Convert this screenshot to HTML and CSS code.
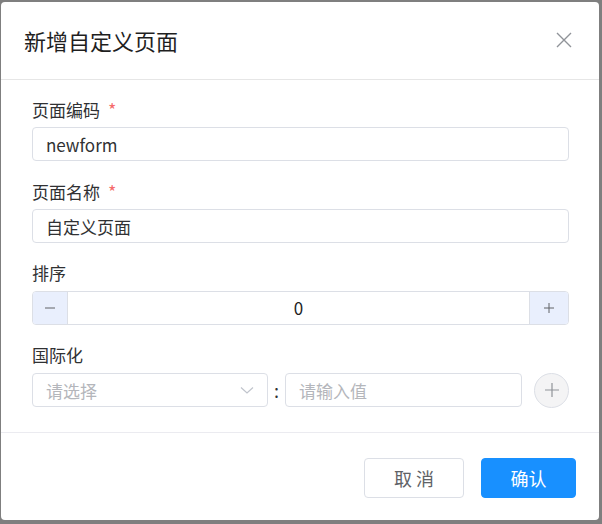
FILE: index.html
```html
<!DOCTYPE html>
<html lang="zh-CN">
<head>
  <meta charset="UTF-8">
  <title>新增自定义页面</title>
  <link rel="stylesheet" href="styles.css">
</head>
<body>

  <div class="dialog">
    <div class="dialog-header">
      <span class="dialog-title">新增自定义页面</span>
      <button class="dialog-close" aria-label="关闭">
        <svg width="16" height="16" viewBox="0 0 16 16">
          <path d="M1 1 L15 15 M15 1 L1 15" stroke="#909399" stroke-width="1.4" fill="none"/>
        </svg>
      </button>
    </div>

    <div class="dialog-body">
      <div class="form-item">
        <label class="form-label required">页面编码</label>
        <input class="text-input" type="text" value="newform">
      </div>

      <div class="form-item">
        <label class="form-label required">页面名称</label>
        <input class="text-input" type="text" value="自定义页面">
      </div>

      <div class="form-item">
        <label class="form-label">排序</label>
        <div class="number-input">
          <span class="num-btn minus">
            <svg width="12" height="12" viewBox="0 0 12 12"><path d="M1 6 H11" stroke="#606266" stroke-width="1"/></svg>
          </span>
          <span class="num-value">0</span>
          <span class="num-btn plus">
            <svg width="12" height="12" viewBox="0 0 12 12"><path d="M1 6 H11 M6 1 V11" stroke="#606266" stroke-width="1"/></svg>
          </span>
        </div>
      </div>

      <div class="form-item">
        <label class="form-label">国际化</label>
        <div class="i18n-row">
          <div class="select">
            <span class="placeholder">请选择</span>
            <svg width="14" height="14" viewBox="0 0 14 14"><path d="M1 4.5 L7 10 L13 4.5" stroke="#c0c4cc" stroke-width="1.2" fill="none"/></svg>
          </div>
          <span class="colon">:</span>
          <div class="value-input"><span class="placeholder">请输入值</span></div>
          <span class="circle-btn">
            <svg width="16" height="16" viewBox="0 0 16 16"><path d="M1 8 H15 M8 1 V15" stroke="#909399" stroke-width="1.2"/></svg>
          </span>
        </div>
      </div>
    </div>

    <div class="dialog-footer">
      <button class="btn btn-default">取 消</button>
      <button class="btn btn-primary">确认</button>
    </div>
  </div>

</body>
</html>
```

FILE: styles.css
```css
body {
  margin: 0;
  background: #7f7f7f;
  font-family: "Noto Sans CJK SC", "Liberation Sans", sans-serif;
  color: #303133;
}

.dialog {
  width: 598px;
  height: 518px;
  margin: 2px 0 0 1px;
  background: #fff;
  border-radius: 4px;
  display: flex;
  flex-direction: column;
}

.dialog-header {
  height: 75px;
  border-bottom: 1px solid #e6e6e6;
  display: flex;
  align-items: center;
  justify-content: space-between;
  padding: 0 27px 2px 23px;
}

.dialog-title {
  font-size: 22px;
  color: #1f1f1f;
}

.dialog-close {
  border: none;
  background: none;
  padding: 0;
  width: 16px;
  height: 16px;
  cursor: pointer;
}

.dialog-body {
  padding: 17px 30px 0 31px;
  flex: 1;
}

.form-item {
  margin-bottom: 18px;
}

.form-label {
  display: block;
  font-size: 17px;
  line-height: 24px;
  height: 24px;
  margin-bottom: 6px;
  color: #303133;
}

.form-label.required::after {
  content: "*";
  color: #f56c6c;
  margin-left: 8px;
  font-size: 18px;
}

.text-input {
  display: block;
  box-sizing: border-box;
  width: 100%;
  height: 34px;
  padding: 0 13px;
  border: 1px solid #dcdfe6;
  border-radius: 4px;
  font-family: inherit;
  font-size: 17px;
  color: #303133;
  outline: none;
}

.number-input {
  display: flex;
  height: 34px;
  box-sizing: border-box;
  border: 1px solid #dcdfe6;
  border-radius: 4px;
  overflow: hidden;
}

.num-btn {
  width: 34px;
  background: #e9effd;
  display: flex;
  align-items: center;
  justify-content: center;
}

.num-btn.minus {
  border-right: 1px solid #dcdfe6;
}

.num-btn.plus {
  width: 38px;
  border-left: 1px solid #dcdfe6;
}

.num-value {
  flex: 1;
  text-align: center;
  line-height: 32px;
  font-size: 17px;
  color: #1f1f1f;
}

.i18n-row {
  display: flex;
  align-items: center;
  height: 34px;
}

.select,
.value-input {
  box-sizing: border-box;
  height: 34px;
  border: 1px solid #dcdfe6;
  border-radius: 4px;
  display: flex;
  align-items: center;
  padding: 0 13px;
}

.select {
  width: 236px;
  justify-content: space-between;
}

.colon {
  width: 17px;
  text-align: center;
  font-size: 18px;
  color: #303133;
}

.value-input {
  width: 237px;
}

.placeholder {
  font-size: 17px;
  color: #b4b6bb;
}

.circle-btn {
  box-sizing: border-box;
  width: 35px;
  height: 35px;
  margin-left: auto;
  border: 1px solid #dcdfe6;
  border-radius: 50%;
  background: #f4f4f5;
  display: flex;
  align-items: center;
  justify-content: center;
}

.dialog-footer {
  border-top: 1px solid #ebebf0;
  padding: 25px 23px 22px 0;
  display: flex;
  justify-content: flex-end;
  gap: 17px;
}

.btn {
  height: 40px;
  border-radius: 4px;
  font-family: inherit;
  font-size: 18px;
  cursor: pointer;
}

.btn-default {
  width: 100px;
  background: #fff;
  border: 1px solid #dcdfe6;
  color: #606266;
}

.btn-primary {
  width: 95px;
  background: #1890ff;
  border: 1px solid #1890ff;
  color: #fff;
}
```
